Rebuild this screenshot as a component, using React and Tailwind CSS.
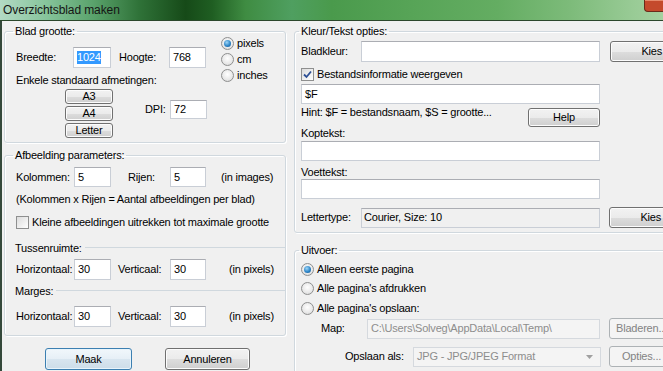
import React from 'react';

const btn =
  'flex items-center justify-center rounded-[3px] border border-[#707070] bg-[linear-gradient(#f2f2f2_0%,#ebebeb_50%,#dddddd_51%,#cfcfcf_100%)] shadow-[inset_0_0_0_1px_#fcfcfc] text-black';
const btnOff =
  'flex items-center justify-center rounded-[3px] border border-[#adb2b5] bg-[#f4f4f4] text-[#838383]';
const field = 'flex items-center border border-[#c9ced6] border-t-[#abadb3] bg-white pl-[3px]';

function Radio({ checked }) {
  return (
    <span className="flex h-[13px] w-[13px] shrink-0 items-center justify-center rounded-full border border-[#8e8f8f] bg-[radial-gradient(circle_at_50%_40%,#ffffff_0%,#e8e8e8_60%,#cfcfcf_100%)]">
      {checked && (
        <span className="h-[7px] w-[7px] rounded-full bg-[radial-gradient(circle_at_40%_35%,#9fd6f7_0%,#2e86c8_55%,#0c4f8c_100%)]" />
      )}
    </span>
  );
}

function Check({ checked }) {
  return (
    <span className="flex h-[13px] w-[13px] shrink-0 items-center justify-center border border-[#8e8f8f] bg-[linear-gradient(135deg,#dcdcdc,#ffffff)]">
      {checked && (
        <svg width="9" height="9" viewBox="0 0 9 9">
          <path d="M1 4.5 L3.5 7 L8 1.5" fill="none" stroke="#2d4f95" strokeWidth="1.8" />
        </svg>
      )}
    </span>
  );
}

function Group({ title, legendClass, className, children }) {
  return (
    <fieldset
      className={`rounded-[3px] border border-[#d0d8de] shadow-[inset_1px_1px_0_#ffffff,1px_1px_0_#ffffff] ${className}`}
    >
      <legend className={`h-[14px] px-[2px] leading-[14px] ${legendClass}`}>{title}</legend>
      {children}
    </fieldset>
  );
}

function Separator({ title }) {
  return (
    <div className="flex h-[14px] items-center pl-[10px]">
      <span className="leading-[14px]">{title}</span>
      <span className="ml-[3px] h-[2px] flex-1 border-t border-[#d0d8de] border-b-white" />
    </div>
  );
}

export default function App() {
  return (
    <div className="h-[371px] w-[663px] overflow-hidden bg-[#f0f0f0] font-['Liberation_Sans',Arial,sans-serif] text-[11px] tracking-[-0.2px] text-black">
      {/* Title bar */}
      <div className="flex h-[21px] items-start border-b border-[#2b472b] bg-[linear-gradient(90deg,#b3dac4_0%,#86c49b_7%,#5aa36c_14%,#2f7238_21%,#164a18_28%,#1f5e22_32%,#3f8c42_37%,#4f9f60_44%,#4a9a4c_50%,#57a457_62%,#64ad62_75%,#7dbb7a_86%,#97ca94_95%,#a4d1a0_100%)]">
        <span className="flex-1 pl-[3px] pt-[3px] text-[12px] leading-[14px] tracking-[-0.1px] text-[#151515]">Overzichtsblad maken</span>
        <div className="h-[12px] w-[19px] shrink-0 rounded-bl-[4px] border-b border-l border-[#6b2a1a] bg-[#c44a2c] shadow-[inset_0_1px_0_#e58a6c]" />
      </div>

      <div className="flex h-[350px] border-l-2 border-[#34483a]">
        {/* Left column */}
        <div className="ml-[2px] w-[282px] shrink-0 pt-[3px]">
          <Group title="Blad grootte:" legendClass="ml-[8px]" className="pb-[4px]">
            <div className="flex">
              <div className="w-[217px] shrink-0 pl-[11px]">
                <div className="mt-[9px] flex h-[21px] items-center">
                  <span className="w-[57px]">Breedte:</span>
                  <div className={`${field} h-[21px] w-[38px]`}>
                    <span className="bg-[#3399ff] leading-[13px] text-white">1024</span>
                  </div>
                  <span className="ml-[8px] w-[50px]">Hoogte:</span>
                  <div className={`${field} h-[21px] w-[37px]`}>768</div>
                </div>
                <div className="mt-[5px] leading-[14px]">Enkele standaard afmetingen:</div>
                <div className="mt-[2px] flex">
                  <div className="ml-[49px] flex flex-col gap-[2px]">
                    <div className={`${btn} h-[15px] w-[48px] leading-[13px]`}>A3</div>
                    <div className={`${btn} h-[15px] w-[48px] leading-[13px]`}>A4</div>
                    <div className={`${btn} h-[15px] w-[48px] leading-[13px]`}>Letter</div>
                  </div>
                  <div className="ml-[32px] mt-[11px] flex h-[19px] items-center">
                    <span className="w-[25px]">DPI:</span>
                    <div className={`${field} h-[19px] w-[37px]`}>72</div>
                  </div>
                </div>
              </div>
              <div className="-ml-[1px] -mt-[3px] flex flex-col">
                <label className="flex h-[16px] items-center gap-[3px]">
                  <Radio checked />
                  <span>pixels</span>
                </label>
                <label className="flex h-[16px] items-center gap-[3px]">
                  <Radio />
                  <span>cm</span>
                </label>
                <label className="flex h-[16px] items-center gap-[3px]">
                  <Radio />
                  <span>inches</span>
                </label>
              </div>
            </div>
          </Group>

          <Group title="Afbeelding parameters:" legendClass="ml-[8px]" className="mt-[5px] pb-[8px]">
            <div className="mt-[5px] flex h-[20px] items-center pl-[11px]">
              <span className="w-[58px]">Kolommen:</span>
              <div className={`${field} h-[20px] w-[37px]`}>5</div>
              <span className="ml-[17px] w-[42px]">Rijen:</span>
              <div className={`${field} h-[20px] w-[36px]`}>5</div>
              <span className="ml-[15px]">(in images)</span>
            </div>
            <div className="mt-[5px] pl-[11px] leading-[14px]">(Kolommen x Rijen = Aantal afbeeldingen per blad)</div>
            <label className="mt-[9px] flex h-[14px] items-center gap-[3px] pl-[11px]">
              <Check />
              <span>Kleine afbeeldingen uitrekken tot maximale grootte</span>
            </label>
            <div className="mt-[12px]">
              <Separator title="Tussenruimte:" />
            </div>
            <div className="mt-[4px] flex h-[21px] items-center pl-[11px]">
              <span className="w-[58px]">Horizontaal:</span>
              <div className={`${field} h-[21px] w-[37px]`}>30</div>
              <span className="ml-[7px] w-[52px]">Verticaal:</span>
              <div className={`${field} h-[21px] w-[36px]`}>30</div>
              <span className="ml-[23px]">(in pixels)</span>
            </div>
            <div className="mt-[4px]">
              <Separator title="Marges:" />
            </div>
            <div className="mt-[8px] flex h-[21px] items-center pl-[11px]">
              <span className="w-[58px]">Horizontaal:</span>
              <div className={`${field} h-[21px] w-[37px]`}>30</div>
              <span className="ml-[7px] w-[52px]">Verticaal:</span>
              <div className={`${field} h-[21px] w-[36px]`}>30</div>
              <span className="ml-[23px]">(in pixels)</span>
            </div>
          </Group>

          <div className="mt-[12px] flex">
            <div className="ml-[41px] flex h-[22px] w-[87px] items-center justify-center rounded-[3px] border border-[#3c7fb1] bg-[linear-gradient(#f1f7fb_0%,#e6eff6_50%,#d8e5ef_51%,#cddde9_100%)] shadow-[inset_0_0_0_1px_#e8f4fb]">
              Maak
            </div>
            <div className={`${btn} ml-[33px] h-[22px] w-[85px]`}>Annuleren</div>
          </div>
        </div>

        {/* Right column */}
        <div className="ml-[8px] w-[420px] shrink-0 pt-[3px]">
          <Group title="Kleur/Tekst opties:" legendClass="ml-[4px]" className="pb-[4px]">
            <div className="pl-[6px]">
              <div className="mt-[3px] flex h-[21px] items-center">
                <span className="w-[60px]">Bladkleur:</span>
                <div className={`${field} h-[21px] w-[239px]`} />
                <div className={`${btn} ml-[10px] h-[21px] w-[60px] justify-end pr-[7px]`}>Kies</div>
              </div>
              <label className="mt-[5px] flex h-[14px] items-center gap-[3px]">
                <Check checked />
                <span>Bestandsinformatie weergeven</span>
              </label>
              <div className={`${field} mt-[3px] h-[20px] w-[299px]`}>$F</div>
              <div className="mt-[1px] flex h-[21px] items-start">
                <span className="w-[227px] leading-[14px]">Hint: $F = bestandsnaam, $S = grootte...</span>
                <div className={`${btn} mt-[3px] h-[19px] w-[72px]`}>Help</div>
              </div>
              <div className="leading-[14px]">Koptekst:</div>
              <div className={`${field} mt-[1px] h-[20px] w-[299px]`} />
              <div className="mt-[4px] leading-[14px]">Voettekst:</div>
              <div className={`${field} h-[20px] w-[299px]`} />
              <div className="mt-[8px] flex h-[21px] items-center">
                <span className="w-[60px]">Lettertype:</span>
                <div className="flex h-[20px] w-[239px] items-center border border-[#c9ced6] border-t-[#abadb3] bg-[#f0f0f0] pl-[2px]">
                  Courier, Size: 10
                </div>
                <div className={`${btn} ml-[9px] h-[21px] w-[60px] justify-end pr-[7px]`}>Kies</div>
              </div>
            </div>
          </Group>

          <Group title="Uitvoer:" legendClass="ml-[4px]" className="mt-[10px] pb-[20px]">
            <div className="pl-[6px]">
              <label className="mt-[5px] flex h-[14px] items-center gap-[3px]">
                <Radio checked />
                <span>Alleen eerste pagina</span>
              </label>
              <label className="mt-[5px] flex h-[14px] items-center gap-[3px]">
                <Radio />
                <span>Alle pagina's afdrukken</span>
              </label>
              <label className="mt-[6px] flex h-[14px] items-center gap-[3px]">
                <Radio />
                <span>Alle pagina's opslaan:</span>
              </label>
              <div className="mt-[3px] flex h-[21px] items-center">
                <span className="ml-[20px] w-[46px]">Map:</span>
                <div className="flex h-[20px] w-[233px] items-center border border-[#d5d9de] bg-[#f4f4f4] pl-[3px] text-[#8d8d8d]">
                  C:\Users\Solveg\AppData\Local\Temp\
                </div>
                <div className={`${btnOff} ml-[9px] h-[21px] w-[60px] justify-start pl-[6px]`}>Bladeren...</div>
              </div>
              <div className="mt-[7px] flex h-[21px] items-center">
                <span className="ml-[44px] w-[68px]">Opslaan als:</span>
                <div className="flex h-[20px] w-[188px] items-center justify-between border border-[#d5d9de] bg-[#f4f4f4] pl-[3px] pr-[7px] text-[#8d8d8d]">
                  <span>JPG - JPG/JPEG Format</span>
                  <svg width="7" height="4" viewBox="0 0 7 4">
                    <path d="M0 0 L7 0 L3.5 4 Z" fill="#a0a0a0" />
                  </svg>
                </div>
                <div className={`${btnOff} ml-[8px] h-[21px] w-[60px] justify-start pl-[12px]`}>Opties...</div>
              </div>
            </div>
          </Group>
        </div>
      </div>
    </div>
  );
}
